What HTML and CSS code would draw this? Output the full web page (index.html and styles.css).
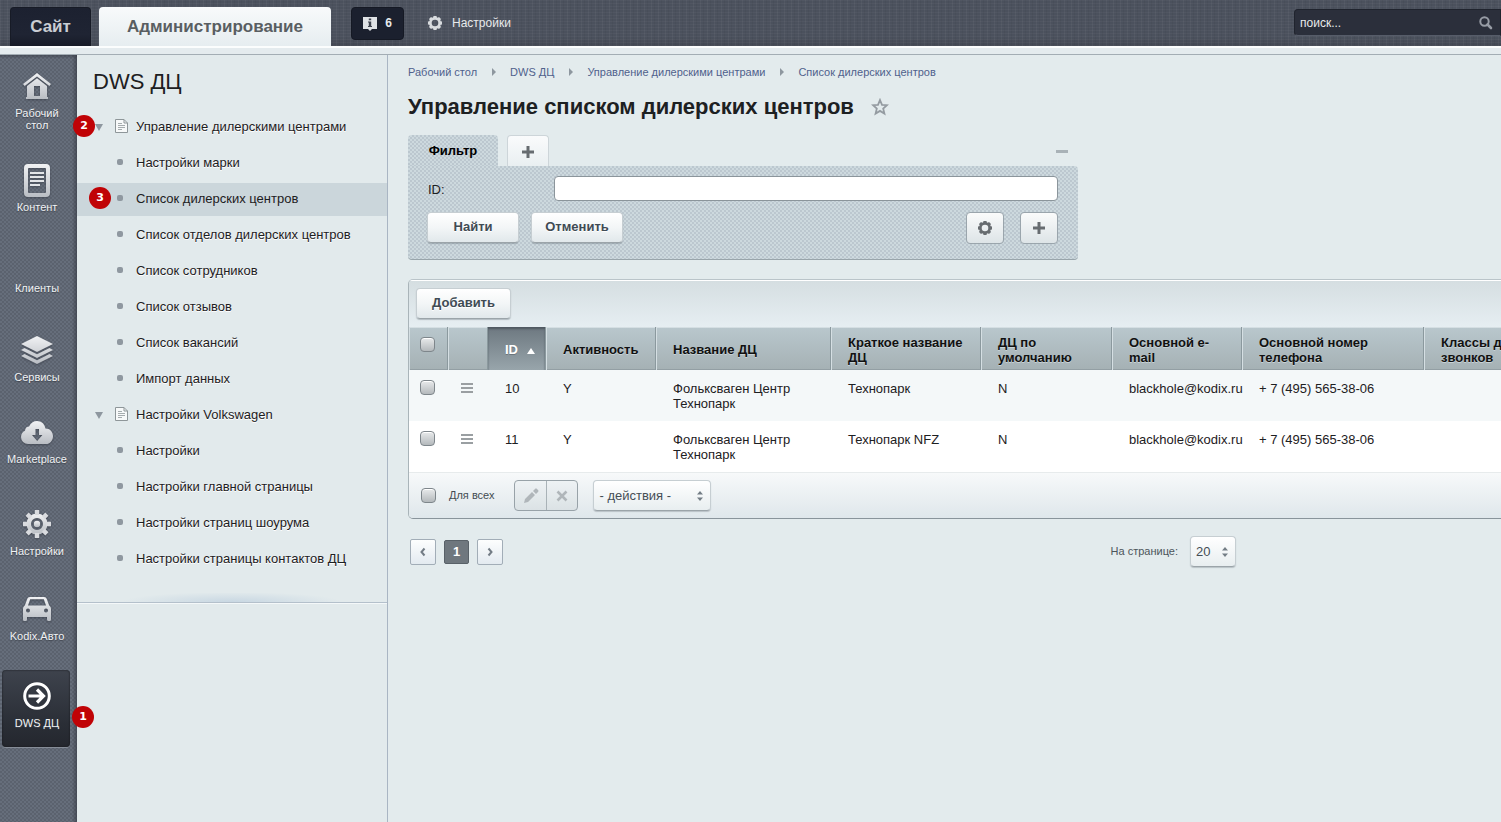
FILE: index.html
```html
<!DOCTYPE html>
<html lang="ru">
<head>
<meta charset="utf-8">
<meta name="viewport" content="width=device-width, initial-scale=1">
<title>Управление списком дилерских центров</title>
<link rel="stylesheet" href="styles.css">
</head>
<body>
<svg class="defs" aria-hidden="true">
  <defs>
    <linearGradient id="silver" x1="0" y1="0" x2="0" y2="1">
      <stop offset="0" stop-color="#f1f2f4"/>
      <stop offset="1" stop-color="#b9bdc3"/>
    </linearGradient>
    <symbol id="i-gear" viewBox="0 0 14 14">
      <path fill-rule="evenodd" d="M5.500 0h3l.3 1.300 1 .4L11 1 13 3l-.7 1.200.4 1 1.300.3v3l-1.300.3-.4 1L13 11l-2 2-1.200-.7-1 .4-.3 1.300h-3l-.3-1.300-1-.4L3 13l-2-2 .7-1.200-.4-1L0 8.500v-3l1.300-.3.4-1L1 3l2-2 1.200.7 1-.4zM7 3.700a3.300 3.300 0 1 0 0 6.600 3.300 3.300 0 0 0 0-6.600z"/>
    </symbol>
    <symbol id="i-plus" viewBox="0 0 14 14"><path d="M5.500 1h3v4.500H13v3H8.500V13h-3V8.500H1v-3h4.500z"/></symbol>
    <symbol id="i-updown" viewBox="0 0 6 10"><path d="M3 0l3 3.500H0zM3 10L0 6.500h6z"/></symbol>
    <symbol id="i-doc" viewBox="0 0 13 14">
      <path d="M.5.5h8.500l3.500 3.500v9.500H.5z" fill="#f7f9f9" stroke="#8e9699"/>
      <path d="M9 .5V4h3.500" fill="none" stroke="#8e9699"/>
      <path d="M3 4.500h4M3 6.500h7M3 8.500h7M3 10.500h4" stroke="#a5acae"/>
    </symbol>
  </defs>
</svg>

<header class="topbar">
  <nav class="tabs">
    <a class="tab tab-site" href="#">Сайт</a>
    <a class="tab tab-admin" href="#">Администрирование</a>
  </nav>
  <button class="notify" type="button" aria-label="Уведомления: 6">
    <svg width="14" height="14" viewBox="0 0 14 14"><path d="M0 0h14v12H9l-2 2-2-2H0z" fill="#dfe2e5"/><path d="M5.800 1.500h2.400v1.800H5.800zM5 4.500h3.200v4.500H9v1H5V9h.8V5.500H5z" fill="#3c414c"/></svg>
    <span>6</span>
  </button>
  <a class="top-settings" href="#"><svg width="14" height="14"><use href="#i-gear"/></svg>Настройки</a>
  <form class="search">
    <input type="text" placeholder="поиск..." aria-label="поиск">
    <button type="button" aria-label="Найти на сайте"><svg width="14" height="14" viewBox="0 0 14 14"><circle cx="5.500" cy="5.500" r="4.200" fill="none" stroke="currentColor" stroke-width="2"/><path d="M8.500 8.500l3.500 3.500" stroke="currentColor" stroke-width="2.600" stroke-linecap="round"/></svg></button>
  </form>
</header>
<div class="strip"></div>

<div class="page">
  <nav class="rail">
    <a class="rail-item" href="#">
      <span class="rail-icon"><svg width="28" height="26" viewBox="0 0 28 26"><path fill="url(#silver)" fill-rule="evenodd" d="M14 0l14 11-1.700 2L14 3.400 1.700 13 0 11zM14 5.200L24 13v11h1v2H3v-2h1V13zM11 13v10h6V13z"/></svg></span>
      <span class="rail-label">Рабочий стол</span>
    </a>
    <a class="rail-item" href="#">
      <span class="rail-icon"><svg width="26" height="33" viewBox="0 0 26 33"><path fill="url(#silver)" fill-rule="evenodd" d="M4 0h18a4 4 0 0 1 4 4v25a4 4 0 0 1-4 4H4a4 4 0 0 1-4-4V4a4 4 0 0 1 4-4zM5 4a1 1 0 0 0-1 1v23a1 1 0 0 0 1 1h16a1 1 0 0 0 1-1V5a1 1 0 0 0-1-1z"/><path stroke="#e3e5e8" stroke-width="2" d="M6 9h14M6 13h14M6 17h14M6 21h10"/></svg></span>
      <span class="rail-label">Контент</span>
    </a>
    <a class="rail-item" href="#"><span class="rail-icon"></span><span class="rail-label">Клиенты</span></a>
    <a class="rail-item" href="#">
      <span class="rail-icon"><svg width="32" height="28" viewBox="0 0 32 28"><path fill="url(#silver)" d="M16 0l16 8-16 8L0 8zM0 14l3.500-2L16 18.300 28.500 12l3.500 2-16 8zM0 20l3.500-2L16 24.300 28.500 18l3.500 2-16 8z"/></svg></span>
      <span class="rail-label">Сервисы</span>
    </a>
    <a class="rail-item" href="#">
      <span class="rail-icon"><svg width="32" height="23" viewBox="0 0 32 23"><path fill="url(#silver)" fill-rule="evenodd" d="M7 23a7 7 0 0 1-7-7c0-3.500 2-5.500 4-6.300C4 7 6 5.500 8 5.500 9.500 2 12.500 0 16 0c4.500 0 7.800 3 8.500 7.500C29 7.500 32 11 32 15.200S29 23 25 23zM14.500 8v6H11l5.200 6 5.200-6H18V8z"/></svg></span>
      <span class="rail-label">Marketplace</span>
    </a>
    <a class="rail-item" href="#">
      <span class="rail-icon"><svg width="28" height="28" viewBox="-14 -14 28 28"><g fill="url(#silver)"><path fill-rule="evenodd" d="M0-10.500a10.500 10.500 0 1 1 0 21 10.500 10.500 0 0 1 0-21zM0-6A6 6 0 1 0 0 6 6 6 0 0 0 0-6z"/><circle r="3.200"/></g><path d="M0-14v5M0 14V9M-14 0h5M14 0H9M-9.900-9.900l3.500 3.500M9.900 9.900L6.400 6.400M-9.900 9.900l3.500-3.500M9.900-9.900L6.400-6.400" stroke="#d9dbdf" stroke-width="4.400"/></svg></span>
      <span class="rail-label">Настройки</span>
    </a>
    <a class="rail-item" href="#">
      <span class="rail-icon"><svg width="28" height="24" viewBox="0 0 28 24"><path fill="url(#silver)" fill-rule="evenodd" d="M7 0h14c1.500 0 2.300.7 2.800 2l2.400 6.500C27.400 9.500 28 10.600 28 12v10.500c0 1-.7 1.500-1.500 1.500h-1c-1 0-1.500-.6-1.500-1.500V20H4v2.500c0 1-.6 1.500-1.500 1.500h-1C.6 24 0 23.500 0 22.500V12c0-1.400.6-2.500 1.800-3.500L4.200 2C4.700.7 5.500 0 7 0zM7.200 2.300L5 8.600h18l-2.200-6.300zM5 11.500a2 2 0 1 0 0 4 2 2 0 0 0 0-4zM23 11.500a2 2 0 1 0 0 4 2 2 0 0 0 0-4z"/></svg></span>
      <span class="rail-label">Kodix.Авто</span>
    </a>
    <a class="rail-item rail-active" href="#">
      <span class="rail-icon"><svg width="28" height="28" viewBox="0 0 28 28" fill="none" stroke="#fff"><circle cx="14" cy="14" r="12.300" stroke-width="3"/><path d="M5.500 14H20M14 7.500l6.500 6.500-6.500 6.500" stroke-width="3.200"/></svg></span>
      <span class="rail-label">DWS ДЦ</span>
      <span class="mark mark-rail">1</span>
    </a>
  </nav>

  <aside class="menu">
    <h2>DWS ДЦ</h2>
    <ul>
      <li><a class="group" href="#"><i class="arrow"></i><svg width="13" height="14"><use href="#i-doc"/></svg>Управление дилерскими центрами<span class="mark mark-group">2</span></a></li>
      <li><a href="#"><i class="dot"></i>Настройки марки</a></li>
      <li><a class="current" href="#"><i class="dot"></i>Список дилерских центров<span class="mark mark-item">3</span></a></li>
      <li><a href="#"><i class="dot"></i>Список отделов дилерских центров</a></li>
      <li><a href="#"><i class="dot"></i>Список сотрудников</a></li>
      <li><a href="#"><i class="dot"></i>Список отзывов</a></li>
      <li><a href="#"><i class="dot"></i>Список вакансий</a></li>
      <li><a href="#"><i class="dot"></i>Импорт данных</a></li>
      <li><a class="group" href="#"><i class="arrow"></i><svg width="13" height="14"><use href="#i-doc"/></svg>Настройки Volkswagen</a></li>
      <li><a href="#"><i class="dot"></i>Настройки</a></li>
      <li><a href="#"><i class="dot"></i>Настройки главной страницы</a></li>
      <li><a href="#"><i class="dot"></i>Настройки страниц шоурума</a></li>
      <li><a href="#"><i class="dot"></i>Настройки страницы контактов ДЦ</a></li>
    </ul>
    <div class="menu-end"></div>
  </aside>

  <main class="main">
    <nav class="crumbs">
      <a href="#">Рабочий стол</a><i></i><a href="#">DWS ДЦ</a><i></i><a href="#">Управление дилерскими центрами</a><i></i><a href="#">Список дилерских центров</a>
    </nav>
    <div class="title">
      <h1>Управление списком дилерских центров</h1>
      <button type="button" aria-label="В избранное"><svg width="18" height="18" viewBox="0 0 18 18"><path d="M9 2l2 4.800 5 .4-3.800 3.400 1.200 5L9 12.900l-4.400 2.700 1.200-5L2 7.200l5-.4z" fill="none" stroke="#949ba1" stroke-width="1.800"/></svg></button>
    </div>

    <section class="filter">
      <div class="filter-tabs">
        <button class="filter-tab" type="button">Фильтр</button>
        <button class="filter-add" type="button" aria-label="Добавить фильтр"><svg width="14" height="14"><use href="#i-plus"/></svg></button>
        <button class="collapse" type="button" aria-label="Свернуть"></button>
      </div>
      <form class="filter-body">
        <div class="field"><label for="fid">ID:</label><input id="fid" type="text"></div>
        <div class="actions">
          <button class="btn" type="button">Найти</button>
          <button class="btn" type="button">Отменить</button>
          <button class="square" type="button" aria-label="Настроить"><svg width="14" height="14"><use href="#i-gear"/></svg></button>
          <button class="square" type="button" aria-label="Добавить условие"><svg width="14" height="14"><use href="#i-plus"/></svg></button>
        </div>
      </form>
    </section>

    <section class="grid">
      <div class="toolbar"><button class="btn" type="button">Добавить</button></div>
      <table>
        <colgroup><col class="c-check"><col class="c-more"><col class="c-id"><col class="c-act"><col class="c-name"><col class="c-short"><col class="c-def"><col class="c-mail"><col class="c-phone"><col class="c-class"></colgroup>
        <thead>
          <tr>
            <th class="pick"><input type="checkbox" aria-label="Выбрать все"></th>
            <th></th>
            <th class="sorted">ID<i></i></th>
            <th>Активность</th>
            <th>Название ДЦ</th>
            <th>Краткое название ДЦ</th>
            <th>ДЦ по умолчанию</th>
            <th>Основной e-mail</th>
            <th>Основной номер телефона</th>
            <th>Классы для звонков</th>
          </tr>
        </thead>
        <tbody>
          <tr>
            <td class="pick"><input type="checkbox" aria-label="Выбрать 10"></td>
            <td class="more"><button type="button" aria-label="Действия"></button></td>
            <td>10</td><td>Y</td><td>Фольксваген Центр Технопарк</td><td>Технопарк</td><td>N</td><td>blackhole@kodix.ru</td><td>+ 7 (495) 565-38-06</td><td></td>
          </tr>
          <tr>
            <td class="pick"><input type="checkbox" aria-label="Выбрать 11"></td>
            <td class="more"><button type="button" aria-label="Действия"></button></td>
            <td>11</td><td>Y</td><td>Фольксваген Центр Технопарк</td><td>Технопарк NFZ</td><td>N</td><td>blackhole@kodix.ru</td><td>+ 7 (495) 565-38-06</td><td></td>
          </tr>
        </tbody>
      </table>
      <div class="grid-foot">
        <label class="for-all"><input type="checkbox">Для всех</label>
        <div class="pair">
          <button type="button" aria-label="Изменить"><svg width="16" height="16" viewBox="0 0 16 16"><path d="M1 15l1-4 7-7 3 3-7 7zM10 3l2-2c.6-.6 1.400-.6 2 0l1 1c.6.6.6 1.400 0 2l-2 2z"/></svg></button>
          <button type="button" aria-label="Удалить"><svg width="12" height="12" viewBox="0 0 12 12"><path d="M1.500 1.500l9 9M10.500 1.500l-9 9" stroke="#b0b6ba" stroke-width="2.600"/></svg></button>
        </div>
        <span class="select select-act"><select aria-label="Действия"><option>- действия -</option></select><svg width="6" height="10"><use href="#i-updown"/></svg></span>
      </div>
    </section>

    <div class="pager">
      <button type="button" aria-label="Назад"><svg width="8" height="10" viewBox="0 0 8 10"><path d="M5.500 1.500L2.500 5l3 3.500" fill="none" stroke="#737c85" stroke-width="2"/></svg></button>
      <button class="page-now" type="button">1</button>
      <button type="button" aria-label="Вперёд"><svg width="8" height="10" viewBox="0 0 8 10"><path d="M2.500 1.500l3 3.500-3 3.500" fill="none" stroke="#737c85" stroke-width="2"/></svg></button>
      <label for="per">На странице:</label>
      <span class="select"><select id="per"><option>20</option></select><svg width="6" height="10"><use href="#i-updown"/></svg></span>
    </div>
  </main>
</div>
</body>
</html>
```
FILE: styles.css
```css
* { box-sizing: border-box; }
body {
  margin: 0;
  min-height: 100vh;
  display: flex;
  flex-direction: column;
  overflow: hidden;
  background: #e3ebed;
  color: #1d2022;
  font: 13px/15px "Liberation Sans", Arial, sans-serif;
}
a { color: inherit; text-decoration: none; }
button, input, select { font: inherit; color: inherit; margin: 0; }
button { padding: 0; border: 0; background: none; display: flex; align-items: center; justify-content: center; }
ul { list-style: none; margin: 0; padding: 0; }
.defs { position: absolute; width: 0; height: 0; }

/* top bar */
.topbar {
  display: flex;
  align-items: flex-start;
  height: 46px;
  padding: 7px 0 0 10px;
  color: #e8eaec;
  font-size: 12px;
  background:
    repeating-linear-gradient(90deg, rgba(255,255,255,.04) 0 1px, transparent 1px 3px, rgba(0,0,0,.04) 3px 4px, transparent 4px 7px),
    repeating-linear-gradient(0deg, rgba(255,255,255,.03) 0 1px, transparent 1px 3px),
    linear-gradient(#4b515d 80%, #434853);
}
.tabs { display: flex; gap: 8px; }
.tab {
  display: flex;
  align-items: center;
  justify-content: center;
  height: 39px;
  padding-bottom: 1px;
  border-radius: 4px 4px 0 0;
  font-size: 17px;
  font-weight: bold;
}
.tab-site { width: 81px; color: #c9cdd3; background: linear-gradient(#1c2130, #1f2433 70%, #171b27); border: 1px solid #171b26; border-bottom: 0; }
.tab-admin { width: 232px; color: #595e62; background: linear-gradient(#f8fafb, #e6edf0); }
.notify {
  gap: 8px;
  width: 53px;
  height: 33px;
  margin-left: 20px;
  border: 1px solid #151924;
  border-radius: 4px;
  background: #1b202e;
  font-weight: bold;
}
.top-settings { display: flex; align-items: center; gap: 10px; height: 32px; margin-left: 24px; }
.top-settings svg { fill: #d8dbde; }
.search {
  display: flex;
  width: 207px;
  height: 27px;
  margin: 2px 0 0 auto;
  border: 1px solid #20242e;
  border-bottom-color: #565c69;
  border-radius: 4px 0 0 4px;
  background: #2b2f3b;
}
.search input { flex: 1; min-width: 0; padding: 1px 5px 0; border: 0; background: none; }
.search input::placeholder { color: #e8eaec; opacity: 1; }
.search button { width: 28px; color: #979ca5; }
.strip { height: 9px; border-top: 2px solid #fbfdfd; border-bottom: 1px solid #a3adb4; background: #e4ebee; }

.page { flex: 1; display: flex; min-width: 0; }

/* section rail */
.rail {
  flex: none;
  display: grid;
  grid-template-rows: 94px 82px 81px 89px 82px 92px 85px 87px;
  align-content: start;
  align-items: end;
  width: 77px;
  padding: 0 7px 0 2px;
  background:
    linear-gradient(rgba(50,54,64,.5), transparent 4px),
    linear-gradient(270deg, rgba(50,54,64,.6), transparent 5px),
    radial-gradient(circle at 1px 1px, rgba(45,50,60,.2) 1px, transparent 1px) 0 0 / 4px 4px,
    radial-gradient(circle at 3px 3px, rgba(45,50,60,.2) 1px, transparent 1px) 0 0 / 4px 4px,
    #666e7b;
}
.rail-item {
  position: relative;
  display: flex;
  flex-direction: column;
  align-items: center;
  gap: 4px;
  padding: 9px 0 18px 2px;
  border-radius: 4px;
  color: #f0f2f4;
  font-size: 11px;
  line-height: 12px;
  text-align: center;
  text-shadow: 0 1px 1px #3e434d;
}
.rail-icon { display: flex; align-items: center; justify-content: center; height: 34px; }
.rail-icon svg { filter: drop-shadow(0 1px 1px rgba(40,44,54,.5)); }
.rail-label { max-width: 60px; }
.rail-active { background: linear-gradient(#3e434d, #2a2e36 70%, #24272e); box-shadow: inset 0 0 2px #14161a, 0 1px 0 #868d98; }

.mark {
  position: absolute;
  z-index: 2;
  width: 22px;
  height: 22px;
  border-radius: 50%;
  background: #c00306;
  color: #fff;
  font: bold 11px/22px "DejaVu Sans", sans-serif;
  text-align: center;
  text-shadow: none;
}
.mark-rail { left: 70px; top: 36px; }
.mark-group { left: -4px; top: 4px; }
.mark-item { left: 12px; top: 4px; }

/* second level menu */
.menu {
  flex: none;
  width: 311px;
  border-right: 1px solid #a9b5c3;
  background: #e2eaec;
}
.menu h2 { margin: 0; padding: 14px 16px 14px; font-size: 22px; line-height: 26px; font-weight: normal; }
.menu ul { display: flex; flex-direction: column; gap: 3px; padding: 2px 0 17px; }
.menu li a { position: relative; display: flex; align-items: center; height: 33px; padding: 0 10px 3px 40px; text-shadow: 0 1px 0 #fff; white-space: nowrap; }
.menu li a.group { padding-left: 18px; }
.menu .group svg { margin-right: 8px; }
.menu li a.current { background: #cbd6db; text-shadow: none; }
.dot { width: 6px; height: 6px; margin-right: 13px; border-radius: 2px; background: #8f98a0; }
.arrow { margin: 2px 12px 0 0; border: 4px solid transparent; border-top: 7px solid #8e979f; border-bottom: 0; }
.menu-end { height: 10px; border-bottom: 1px solid #b4c0cb; background: radial-gradient(ellipse 110px 10px at 50% 100%, #c8d7e2, transparent); box-shadow: 0 1px 0 #f4f8f9; }

/* content */
.main { flex: 1; min-width: 0; padding: 10px 0 0 20px; overflow: hidden; background: #e3ebed; }
.crumbs { display: flex; align-items: center; height: 14px; color: #4f618c; font-size: 11px; }
.crumbs i { margin: 0 14px 0 15px; border: 4px solid transparent; border-left: 4px solid #8e979f; border-right: 0; }
.title { display: flex; align-items: center; gap: 17px; height: 32px; margin-top: 12px; }
.title h1 { margin: 0; font-size: 22px; line-height: 26px; }

.filter { max-width: 670px; margin-top: 12px; }
.filter-tabs { display: flex; align-items: flex-start; height: 31px; }
.filter-tab, .filter-body {
  background:
    radial-gradient(circle at 1px 1px, rgba(160,172,182,.38) 1px, transparent 1px) 0 0 / 4px 4px,
    radial-gradient(circle at 3px 3px, rgba(160,172,182,.38) 1px, transparent 1px) 0 0 / 4px 4px,
    #cdd9de;
}
.filter-tab { width: 90px; height: 31px; border-radius: 4px 4px 0 0; color: #000; font-weight: bold; }
.filter-add { width: 42px; height: 31px; padding-top: 2px; margin-left: 9px; border: 1px solid #cdd5d9; border-bottom: 0; border-radius: 4px 4px 0 0; background: linear-gradient(#fafbfc, #e9eff1); fill: #676c70; }
.collapse { width: 12px; height: 3px; margin: 15px 10px 0 auto; background: #a9b2b7; }
.filter-body { padding: 10px 20px 15px 19px; border-bottom: 1px solid #98a4aa; border-radius: 0 4px 4px 4px; }
.field { display: flex; align-items: center; }
.field label { width: 127px; padding: 2px 0 0 1px; }
.field input { flex: 1; min-width: 0; height: 25px; padding: 0 6px; border: 1px solid #8b959b; border-radius: 4px; background: #fff; }
.actions { display: flex; gap: 12px; margin-top: 11px; }
.btn {
  min-width: 92px;
  height: 31px;
  padding: 0 13px 2px;
  border: 1px solid #c6ced2;
  border-bottom-color: #9ba4a9;
  border-radius: 4px;
  background: linear-gradient(#fff, #f3f6f7 50%, #e1e8eb);
  box-shadow: 0 1px 1px rgba(90,100,110,.35);
  color: #3f4b54;
  font-weight: bold;
  text-shadow: 0 1px 0 #fff;
}
.square { width: 38px; height: 32px; margin-left: 4px; border: 1px solid #9aa5ac; border-radius: 4px; background: linear-gradient(#fafbfb, #dde4e7); fill: #676c70; }
.btn + .square { margin-left: auto; }

.grid { margin-top: 19px; min-width: 1146px; border: 1px solid #a9b4b9; border-top-color: #bac4c9; border-bottom-color: #89949b; border-radius: 5px; overflow: hidden; }
.toolbar { height: 47px; padding: 7px; border-top: 1px solid #fff; background: linear-gradient(#d5dee1, #e6eef2); }
.toolbar .btn { min-width: 95px; }
table { width: 100%; border-spacing: 0; table-layout: fixed; }
.c-check { width: 39px; }
.c-more { width: 40px; }
.c-id { width: 58px; }
.c-act { width: 110px; }
.c-name { width: 175px; }
.c-short { width: 150px; }
.c-def { width: 131px; }
.c-mail { width: 130px; }
.c-phone { width: 182px; }
th { height: 43px; padding: 2px 14px 0 17px; border-right: 1px solid #8b999e; color: #111; text-align: left; vertical-align: middle; background: linear-gradient(#b9c7cd, #a5b1b4); box-shadow: inset 1px 1px 0 #d5dfe3, inset 0 -1px 0 #939fa4; text-shadow: 0 1px 0 #c8d3d7; }
.sorted { padding-right: 0; white-space: nowrap; color: #fff; background: linear-gradient(#6d7880, #98a5ab); box-shadow: inset 0 2px 2px #4f5860; text-shadow: 0 1px 0 #6b757c; }
.sorted i { display: inline-block; margin-left: 9px; border: 4px solid transparent; border-bottom: 6px solid #fff; border-top: 0; }
td { height: 51px; padding: 11px 0 10px 17px; vertical-align: top; background: #fff; }
td:nth-child(5) { padding-right: 40px; }
tbody tr:first-child td { background: #f4f8f9; }
th.pick { padding: 0 0 8px 11px; }
td.pick { padding: 10px 0 0 11px; }
td.more { padding: 13px 0 0 13px; }
.more button { width: 12px; height: 10px; background: linear-gradient(#9a9fa2 2px, transparent 2px 4px, #9a9fa2 4px 6px, transparent 6px 8px, #9a9fa2 8px); }
input[type="checkbox"] { appearance: none; display: block; width: 15px; height: 15px; border: 1px solid #7e868b; border-radius: 4px; background: linear-gradient(#e8eaeb, #b4b9bc); box-shadow: inset 0 1px 0 #fff; }
.grid-foot { display: flex; align-items: center; height: 46px; padding: 0 12px; border-top: 1px solid #e7ebec; background: linear-gradient(#f7f9fa, #dfe7eb); color: #434b51; }
.for-all { display: flex; align-items: center; gap: 13px; font-size: 11px; }
.pair { display: flex; margin-left: 20px; border: 1px solid #98a2a8; border-radius: 4px; background: linear-gradient(#eef2f4, #dbe2e5); fill: #b0b6ba; }
.pair button { width: 31px; height: 29px; }
.pair button + button { border-left: 1px solid #a9b2b7; }
.select { position: relative; display: inline-flex; fill: #737d85; }
.select select { appearance: none; width: 46px; height: 31px; padding: 0 5px; border: 1px solid #c6ced2; border-bottom-color: #9ba4a9; border-radius: 4px; background: linear-gradient(#fff, #e8eef0); box-shadow: 0 1px 1px rgba(90,100,110,.3); color: #454e55; }
.select-act { margin-left: 15px; }
.select-act select { width: 118px; }
.select svg { position: absolute; right: 8px; top: 11px; }

.pager { display: flex; align-items: center; gap: 8px; max-width: 828px; margin-top: 17px; padding-left: 2px; }
.pager button { width: 26px; height: 26px; border: 1px solid #a2adb7; border-radius: 2px; background: linear-gradient(#fdfefe, #e3eaf0); }
.pager .page-now { width: 25px; height: 24px; border: 1px solid #596168; background: #6f777e; color: #fff; font-weight: bold; }
.pager label { margin: 0 4px 0 auto; color: #4c555b; font-size: 11px; }
```
